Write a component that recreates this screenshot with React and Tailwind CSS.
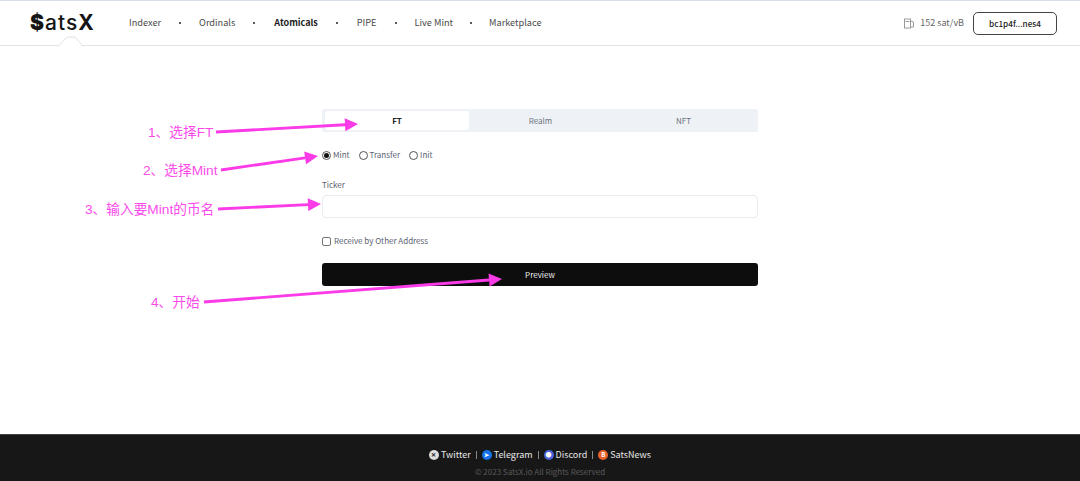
const font = { fontFamily: '"Noto Sans CJK SC", "Noto Sans", sans-serif' };

function Sep() {
  return <span className="block w-[2px] h-[2px] rounded-full bg-[#222]" />;
}

function NavLink({ children, bold }) {
  return (
    <span className={bold ? "text-[9px] font-bold text-[#1c1c1c]" : "text-[9.2px] text-[#4a4a4a]"}>{children}</span>
  );
}

function Radio({ on, label }) {
  return (
    <label className="flex items-center gap-[2px]">
      <span className={"w-[9px] h-[9px] rounded-full border border-[#555] bg-white flex items-center justify-center"}>
        {on && <span className="w-[5px] h-[5px] rounded-full bg-[#111]" />}
      </span>
      <span className="text-[8px] text-[#5b6270]">{label}</span>
    </label>
  );
}

function Arrow({ x1, y1, x2, y2 }) {
  const dx = x2 - x1, dy = y2 - y1, l = Math.hypot(dx, dy), ux = dx / l, uy = dy / l;
  const hl = 13, hw = 6.5;
  const bx = x2 - ux * hl, by = y2 - uy * hl;
  const pts = `${x2},${y2} ${bx - uy * hw},${by + ux * hw} ${bx + uy * hw},${by - ux * hw}`;
  return (
    <g>
      <line x1={x1} y1={y1} x2={bx} y2={by} stroke="#fb3be8" strokeWidth="2.8" />
      <polygon points={pts} fill="#fb3be8" />
    </g>
  );
}

function Note({ children, className }) {
  return (
    <span
      className={"absolute text-[13.7px] leading-none text-[#fb4bea] whitespace-nowrap " + className}
      style={{ fontFamily: '"Liberation Sans", "Noto Sans CJK SC", sans-serif' }}
    >
      {children}
    </span>
  );
}

function FooterLink({ color, label, glyph }) {
  return (
    <span className="flex items-center gap-[2px]">
      <span className={"w-[10px] h-[10px] rounded-full flex items-center justify-center text-[6px] leading-none font-bold " + color}>{glyph}</span>
      <span className="text-[9px] text-[#e8e8e8]">{label}</span>
    </span>
  );
}

export default function App() {
  return (
    <div className="relative w-[1080px] h-[481px] overflow-hidden bg-white flex flex-col" style={font}>
      <header className="relative h-[46px] shrink-0 border-t border-t-[#d9deeb] border-b border-b-[#e3e3e3] flex items-center pl-[30px] pr-[23px]">
        <span className="w-[64px] text-[21px] leading-none font-bold text-[#151515] tracking-[1px] -mt-[2px] whitespace-nowrap" style={{ fontFamily: 'Inter, sans-serif' }}>
          <span className="font-black">$</span><span className="font-medium">ats</span>X
        </span>
        <nav className="ml-[35px] flex items-center">
          <NavLink>Indexer</NavLink>
          <span className="ml-[18px] mr-[18px]"><Sep /></span>
          <NavLink>Ordinals</NavLink>
          <span className="ml-[18px] mr-[19px]"><Sep /></span>
          <NavLink bold>Atomicals</NavLink>
          <span className="ml-[18px] mr-[19px]"><Sep /></span>
          <NavLink>PIPE</NavLink>
          <span className="ml-[18px] mr-[18px]"><Sep /></span>
          <NavLink>Live Mint</NavLink>
          <span className="ml-[17px] mr-[17px]"><Sep /></span>
          <NavLink>Marketplace</NavLink>
        </nav>
        <div className="ml-auto flex items-center">
          <svg width="11" height="11" viewBox="0 0 11 11" fill="none" stroke="#9a9a9a" strokeWidth="1">
            <rect x="0.5" y="1" width="6" height="9" />
            <path d="M1.5 3.5h4" />
            <path d="M7 3l2.5 1v5h-2.5" />
          </svg>
          <span className="ml-[5px] text-[9px] text-[#666]">152 sat/vB</span>
          <button className="ml-[9px] w-[84px] h-[23px] rounded-[5px] border border-[#444] bg-white text-[8.2px] font-medium text-[#222]">bc1p4f...nes4</button>
        </div>
        <svg className="absolute left-[57px] top-[35px]" width="28" height="11" viewBox="0 0 28 11">
          <path d="M1 10.5 L9 2 Q10 1 12 1 H16 Q18 1 19 2 L26 10.5" fill="white" stroke="#e3e3e3" />
        </svg>
      </header>

      <main className="flex-1 pt-[63px] pl-[322px]">
        <div className="w-[436px]">
          <div className="h-[23px] bg-[#eef2f6] rounded-[2px] flex items-center px-[3px]">
            <div className="w-[144px] h-[19px] bg-white rounded-[3px] flex items-center justify-center text-[8px] font-bold text-[#222]">FT</div>
            <div className="w-[143px] text-center text-[8px] text-[#6b7280]">Realm</div>
            <div className="flex-1 text-center text-[8px] text-[#6b7280]">NFT</div>
          </div>
          <div className="mt-[17px] h-[12px] flex items-center gap-[9px]">
            <Radio on label="Mint" />
            <Radio label="Transfer" />
            <Radio label="Init" />
          </div>
          <div className="mt-[18px] h-[12px] flex items-center text-[8px] text-[#5b6270]">Ticker</div>
          <div className="mt-[4px] h-[23px] rounded-[4px] border border-[#e8ebf0] bg-white" />
          <label className="mt-[17px] h-[12px] flex items-center gap-[3px]">
            <span className="w-[9px] h-[9px] rounded-[2px] border border-[#777] bg-white" />
            <span className="text-[8px] text-[#5b6270]">Receive by Other Address</span>
          </label>
          <button className="mt-[16px] w-full h-[23px] rounded-[3px] bg-[#0d0d0d] text-[8px] text-[#eee]">Preview</button>
        </div>
      </main>

      <footer className="h-[47px] shrink-0 bg-[#171717] border-t border-t-[#444] flex flex-col items-center pt-[13px]">
        <div className="h-[14px] flex items-center gap-[5px]">
          <FooterLink color="bg-[#ddd] text-[#222]" glyph="✕" label="Twitter" />
          <span className="w-px h-[8px] bg-[#888]" />
          <FooterLink color="bg-[#1572e8] text-white" glyph="➤" label="Telegram" />
          <span className="w-px h-[8px] bg-[#888]" />
          <FooterLink color="bg-[#4a62d8] text-white" glyph="●" label="Discord" />
          <span className="w-px h-[8px] bg-[#888]" />
          <FooterLink color="bg-[#e8622a] text-white" glyph="B" label="SatsNews" />
        </div>
        <div className="mt-[4px] text-[8px] leading-[12px] text-[#5a5a5a]">© 2023 SatsX.io All Rights Reserved</div>
      </footer>

      <svg className="absolute left-0 top-0 pointer-events-none" width="1080" height="481">
        <Arrow x1={216} y1={132} x2={358} y2={124} />
        <Arrow x1={221} y1={170} x2={318} y2={156} />
        <Arrow x1={218} y1={209} x2={321} y2={204} />
        <Arrow x1={204} y1={302} x2={502} y2={279} />
      </svg>
      <Note className="left-[148px] top-[126px]">1、选择FT</Note>
      <Note className="left-[143px] top-[164px]">2、选择Mint</Note>
      <Note className="left-[85px] top-[203px]">3、输入要Mint的币名</Note>
      <Note className="left-[151px] top-[296px]">4、开始</Note>
    </div>
  );
}
